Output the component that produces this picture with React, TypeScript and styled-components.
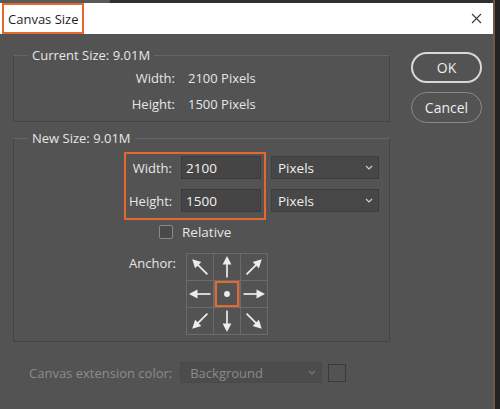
import React from "react";
import styled, { createGlobalStyle } from "styled-components";

const ORANGE = "#e4692c";
const TEXT = "#e6e6e6";

const GlobalStyle = createGlobalStyle`
  html, body {
    margin: 0;
    padding: 0;
    background: #232323;
  }
  body {
    font-family: "Open Sans", "Noto Sans", sans-serif;
    font-size: 13px;
  }
`;

type Dir = "nw" | "n" | "ne" | "w" | "c" | "e" | "sw" | "s" | "se";

const ANGLES: Record<Dir, number> = {
  nw: -45,
  n: 0,
  ne: 45,
  w: -90,
  c: 0,
  e: 90,
  sw: -135,
  s: 180,
  se: 135,
};

const ANCHOR_DIRS: Dir[] = ["nw", "n", "ne", "w", "c", "e", "sw", "s", "se"];

const Chevron = ({ color }: { color: string }) => (
  <svg width="8" height="5" viewBox="0 0 8 5">
    <polyline points="1,1 4,4 7,1" fill="none" stroke={color} strokeWidth="1.2" />
  </svg>
);

const AnchorCell = ({ dir }: { dir: Dir }) => (
  <StyledCell selected={dir === "c"}>
    <svg width="26" height="26" viewBox="0 0 26 26">
      {dir === "c" ? (
        <circle cx="13" cy="13" r="3.8" fill="#ececec" />
      ) : (
        <g transform={`rotate(${ANGLES[dir]} 13 13)`}>
          <line x1="13" y1="23.5" x2="13" y2="9" stroke="#ececec" strokeWidth="1.7" />
          <polygon points="13,2 8.6,10.5 17.4,10.5" fill="#ececec" />
        </g>
      )}
    </svg>
  </StyledCell>
);

const App = () => {
  return (
    <>
      <GlobalStyle />
      <StyledScreen>
        <StyledTopStrip />
        <StyledWindow>
          <StyledTitleBar>
            <StyledTitle>Canvas Size</StyledTitle>
            <StyledClose>
              <svg width="11" height="11" viewBox="0 0 11 11">
                <path d="M1 1 L10 10 M10 1 L1 10" stroke="#3a3a3a" strokeWidth="1.1" />
              </svg>
            </StyledClose>
          </StyledTitleBar>

          <StyledBody>
            <StyledLeft>
              <StyledGroup>
                <StyledLegend>Current Size: 9.01M</StyledLegend>
                <StyledInfoGrid>
                  <StyledLabel>Width:</StyledLabel>
                  <span>2100 Pixels</span>
                  <StyledLabel>Height:</StyledLabel>
                  <span>1500 Pixels</span>
                </StyledInfoGrid>
              </StyledGroup>

              <StyledGroup second>
                <StyledLegend>New Size: 9.01M</StyledLegend>
                <StyledSizeRow>
                  <StyledHighlight>
                    <StyledLabel>Width:</StyledLabel>
                    <StyledInput>2100</StyledInput>
                    <StyledLabel>Height:</StyledLabel>
                    <StyledInput>1500</StyledInput>
                  </StyledHighlight>
                  <StyledUnitColumn>
                    <StyledSelect>
                      Pixels
                      <Chevron color="#cfcfcf" />
                    </StyledSelect>
                    <StyledSelect>
                      Pixels
                      <Chevron color="#cfcfcf" />
                    </StyledSelect>
                  </StyledUnitColumn>
                </StyledSizeRow>

                <StyledCheckRow>
                  <StyledCheckbox />
                  Relative
                </StyledCheckRow>

                <StyledAnchorRow>
                  <StyledAnchorLabel>Anchor:</StyledAnchorLabel>
                  <StyledAnchorGrid>
                    {ANCHOR_DIRS.map((d) => (
                      <AnchorCell key={d} dir={d} />
                    ))}
                  </StyledAnchorGrid>
                </StyledAnchorRow>
              </StyledGroup>

              <StyledExtensionRow>
                <span>Canvas extension color:</span>
                <StyledSelect disabled>
                  Background
                  <Chevron color="#7a7a7a" />
                </StyledSelect>
                <StyledSwatch />
              </StyledExtensionRow>
            </StyledLeft>

            <StyledButtons>
              <StyledButton primary>OK</StyledButton>
              <StyledButton>Cancel</StyledButton>
            </StyledButtons>
          </StyledBody>
        </StyledWindow>
      </StyledScreen>
    </>
  );
};

export default App;

const StyledScreen = styled.div`
  width: 500px;
  height: 409px;
  overflow: hidden;
  display: flex;
  flex-direction: column;
  background: #232323;
`;

const StyledTopStrip = styled.div`
  height: 3px;
  width: 493px;
  background: linear-gradient(to right, #5a5a5a 0 110px, #2f2f2f 110px);
  border-right: 2px solid #6e5a43;
`;

const StyledWindow = styled.div`
  width: 493px;
  flex: 1;
  display: flex;
  flex-direction: column;
  border-right: 2px solid #6e5a43;
`;

const StyledTitleBar = styled.div`
  height: 31px;
  background: #ffffff;
  display: flex;
  align-items: center;
  justify-content: space-between;
  padding-left: 2px;
  padding-right: 11px;
  box-sizing: border-box;
`;

const StyledTitle = styled.span`
  height: 31px;
  box-sizing: border-box;
  border: 2.5px solid ${ORANGE};
  padding: 0 4px 0 4px;
  display: flex;
  align-items: center;
  color: #1e1e1e;
  font-size: 13px;
`;

const StyledClose = styled.span`
  display: flex;
  align-items: center;
`;

const StyledBody = styled.div`
  flex: 1;
  background: #535353;
  display: flex;
  padding: 13px 0 0 13px;
  gap: 21px;
  color: ${TEXT};
`;

const StyledLeft = styled.div`
  width: 377px;
  display: flex;
  flex-direction: column;
`;

const StyledGroup = styled.fieldset<{ second?: boolean }>`
  margin: ${(props) => (props.second ? "8px 0 0 0" : "0")};
  padding: 0 0 ${(props) => (props.second ? "6px" : "7px")} 0;
  border: 1px solid #444444;
  border-top-color: #666666;
  min-width: 0;
`;

const StyledLegend = styled.legend`
  margin-left: 14px;
  padding: 0 4px;
  line-height: 16px;
  font-size: 13px;
`;

const StyledInfoGrid = styled.div`
  display: grid;
  grid-template-columns: 161px auto;
  column-gap: 13px;
  row-gap: 6px;
  padding-top: 5px;
  line-height: 20px;
`;

const StyledLabel = styled.span`
  text-align: right;
`;

const StyledSizeRow = styled.div`
  display: flex;
  align-items: flex-start;
  gap: 5px;
  margin: 6px 0 0 110px;
`;

const StyledHighlight = styled.div`
  display: grid;
  grid-template-columns: 43px 80px;
  column-gap: 9px;
  row-gap: 10px;
  align-items: center;
  border: 2px solid ${ORANGE};
  padding: 2px 3px 6px 3px;
`;

const StyledInput = styled.div`
  height: 23px;
  box-sizing: border-box;
  background: #454545;
  border: 1px solid #3c3c3c;
  color: #f2f2f2;
  font-size: 13.5px;
  padding-left: 4px;
  display: flex;
  align-items: center;
`;

const StyledUnitColumn = styled.div`
  display: flex;
  flex-direction: column;
  gap: 10px;
  padding-top: 4px;
`;

const StyledSelect = styled.div<{ disabled?: boolean }>`
  width: ${(props) => (props.disabled ? "142px" : "108px")};
  height: ${(props) => (props.disabled ? "21px" : "23px")};
  box-sizing: border-box;
  background: ${(props) => (props.disabled ? "#4c4c4c" : "#474747")};
  border: 1px solid ${(props) => (props.disabled ? "#494949" : "#3d3d3d")};
  color: ${(props) => (props.disabled ? "#8a8a8a" : "#f0f0f0")};
  font-size: ${(props) => (props.disabled ? "13px" : "13.5px")};
  display: flex;
  align-items: center;
  justify-content: space-between;
  padding: 0 5px 0 ${(props) => (props.disabled ? "9px" : "6px")};
`;

const StyledCheckRow = styled.div`
  display: flex;
  align-items: center;
  gap: 9px;
  margin: 4px 0 0 145px;
  line-height: 16px;
  font-size: 13.5px;
`;

const StyledCheckbox = styled.span`
  width: 14px;
  height: 14px;
  box-sizing: border-box;
  border: 1px solid #8a8a8a;
  border-radius: 2px;
  background: #4a4a4a;
`;

const StyledAnchorRow = styled.div`
  display: flex;
  align-items: flex-start;
  gap: 10px;
  margin: 13px 0 0 111px;
`;

const StyledAnchorLabel = styled.span`
  width: 51px;
  text-align: right;
  padding-top: 2px;
  line-height: 16px;
`;

const StyledAnchorGrid = styled.div`
  display: grid;
  grid-template-columns: repeat(3, 26px);
  grid-template-rows: repeat(3, 26px);
  gap: 1px;
  padding: 1px;
  background: #6b6b6b;
`;

const StyledCell = styled.div<{ selected: boolean }>`
  background: #535353;
  display: flex;
  align-items: center;
  justify-content: center;
  box-sizing: border-box;
  overflow: hidden;
  border: ${(props) => (props.selected ? `2px solid ${ORANGE}` : "none")};
  margin: ${(props) => (props.selected ? "0 1px 0 1px" : "0")};
`;

const StyledExtensionRow = styled.div`
  display: flex;
  align-items: center;
  gap: 8px;
  margin-top: 20px;
  padding-left: 16px;
  color: #8c8c8c;
`;

const StyledSwatch = styled.span`
  width: 18px;
  height: 18px;
  box-sizing: border-box;
  border: 1px solid #3a3a3a;
  margin-left: -2px;
`;

const StyledButtons = styled.div`
  display: flex;
  flex-direction: column;
  gap: 9px;
  padding-top: 5px;
`;

const StyledButton = styled.div<{ primary?: boolean }>`
  width: 71px;
  height: 31px;
  box-sizing: border-box;
  border-radius: 16px;
  border: ${(props) => (props.primary ? "2px solid #d8d8d8" : "1px solid #8a8a8a")};
  color: #eeeeee;
  font-size: 14px;
  display: flex;
  align-items: center;
  justify-content: center;
`;
